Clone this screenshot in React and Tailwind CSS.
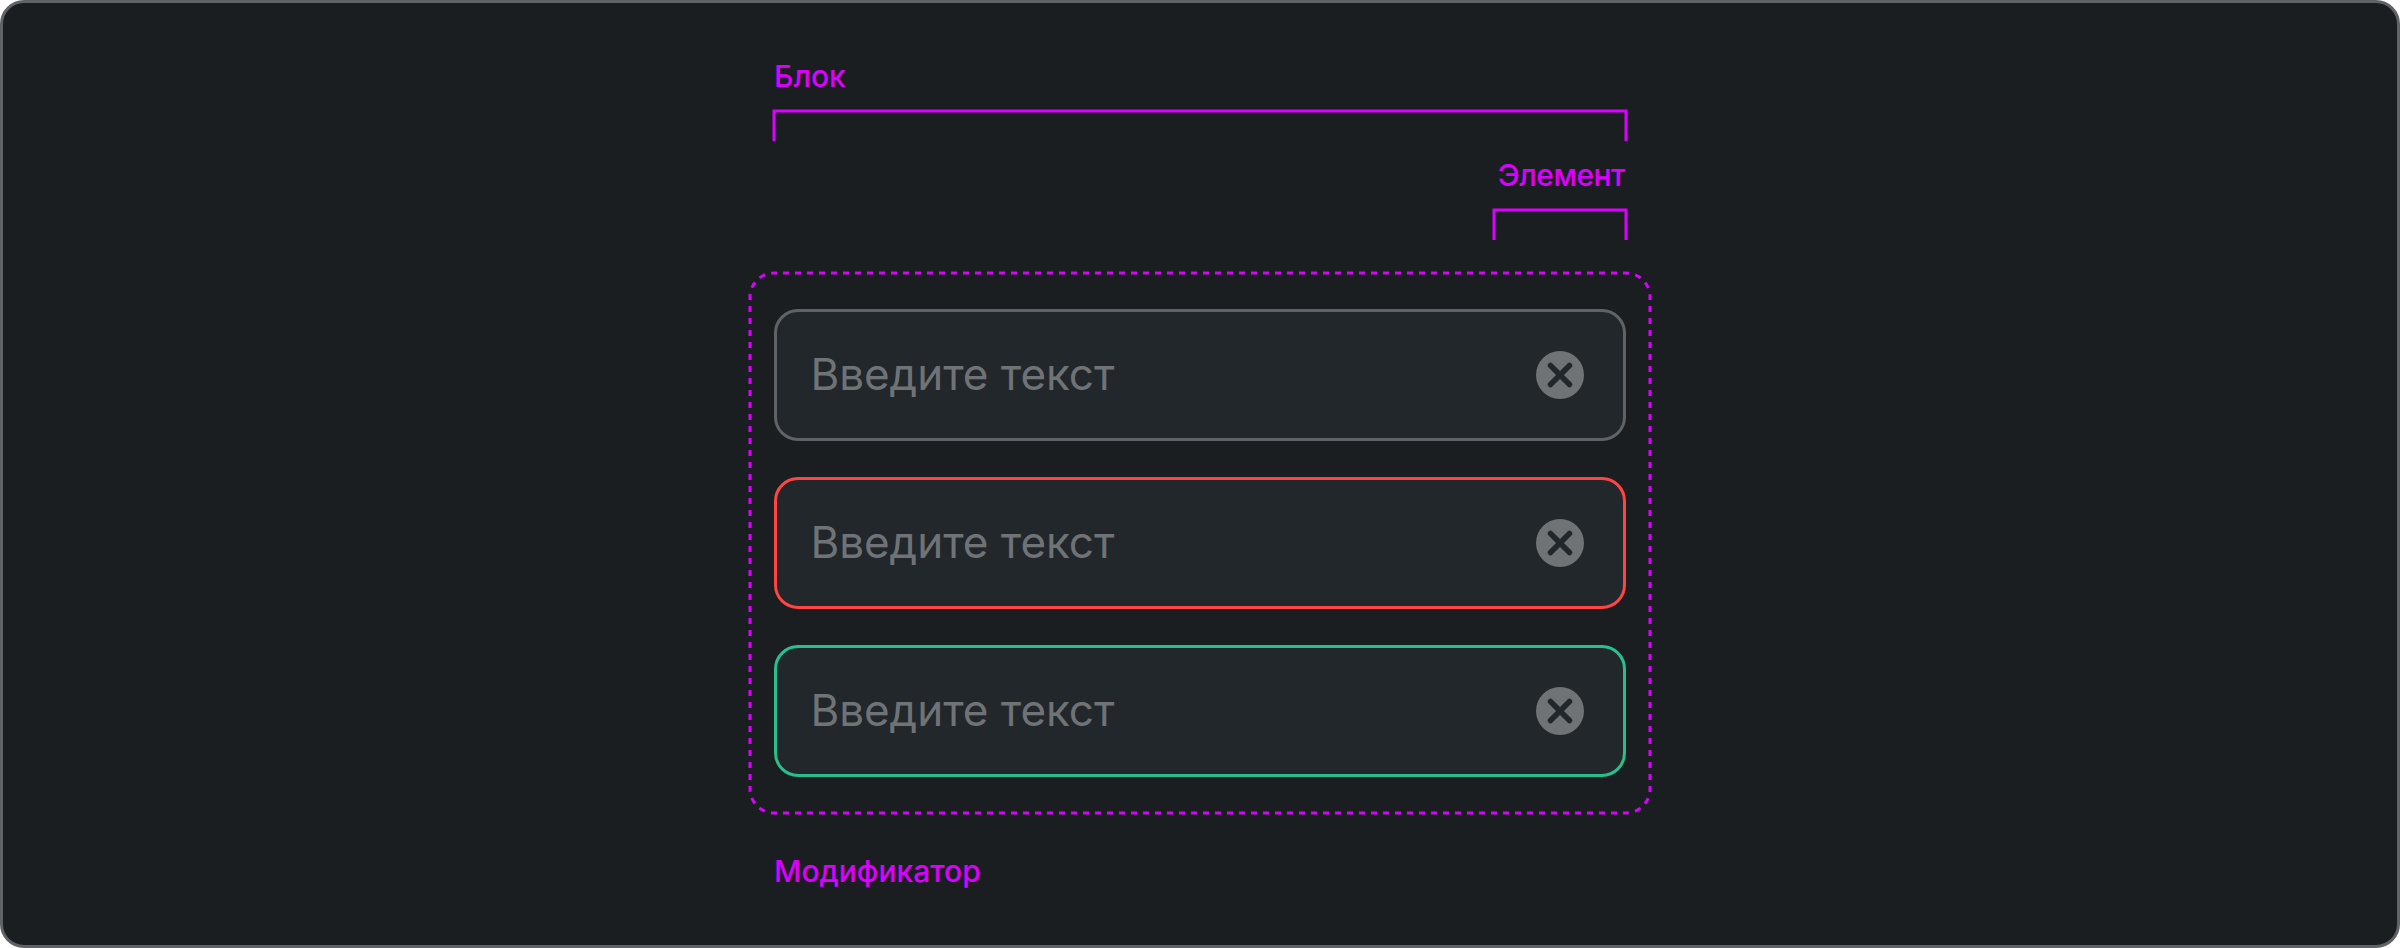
const FIELDS = [
  { id: "default", border: "border-[#5f6367]" },
  { id: "error", border: "border-[#ff4444]" },
  { id: "success", border: "border-[#28bf8c]" },
];

function ClearIcon() {
  return (
    <svg className="size-12 shrink-0" viewBox="0 0 48 48" fill="none" aria-hidden="true">
      <circle cx="24" cy="24" r="24" fill="#6f7376" />
      <path d="M14.5 14.5L33.5 33.5M33.5 14.5L14.5 33.5" stroke="#22272b" strokeWidth="5.5" strokeLinecap="round" />
    </svg>
  );
}

function Field({ border }) {
  return (
    <div className={`flex h-[132px] items-center justify-between rounded-[24px] border-[3px] bg-[#22272b] pr-[39px] pl-[33.5px] ${border}`}>
      <span className="pb-[2px] text-[44px] leading-[52px] tracking-[-0.06px] text-[#6f7376]">Введите текст</span>
      <ClearIcon />
    </div>
  );
}

function Bracket({ width, className }) {
  return (
    <svg className={className} width={width + 4} height="32" viewBox={`-2 -2 ${width + 4} 32`} fill="none" aria-hidden="true">
      <path d={`M0 30V0H${width}V30`} stroke="#db00ff" strokeWidth="3" />
    </svg>
  );
}

function DashedOutline() {
  return (
    <svg className="pointer-events-none absolute inset-0" width="904" height="544" viewBox="-2 -2 904 544" fill="none" stroke="#db00ff" strokeWidth="3" aria-hidden="true">
      <path d="M24 0H876M24 540H876M0 24V516M900 24V516" strokeDasharray="6 6" strokeDashoffset="3" />
      <path
        d="M0 24A24 24 0 0 1 24 0M876 0A24 24 0 0 1 900 24M900 516A24 24 0 0 1 876 540M24 540A24 24 0 0 1 0 516"
        strokeDasharray="6.283 6.283"
        strokeDashoffset="3.1415"
      />
    </svg>
  );
}

export default function App() {
  return (
    <div className="h-[948px] w-[2400px] bg-white font-['Inter',sans-serif]">
      <main className="flex h-full flex-col items-center rounded-[24px] border-[3px] border-[#5f6367] bg-[#1a1e21] pt-[55px] text-[30px] leading-[36px] font-medium text-[#db00ff]">
        <div className="flex w-[856px] flex-col">
          <div className="pl-[2px]">Блок</div>
          <Bracket width={852} className="mt-[15px]" />
          <div className="mt-[16px] pr-[3px] text-right tracking-[-0.5px]">Элемент</div>
          <Bracket width={132} className="mt-[15px] self-end" />
        </div>
        <section className="relative mt-[31px] flex h-[544px] w-[904px] flex-col justify-center gap-9 px-[26px] font-normal">
          <DashedOutline />
          {FIELDS.map((field) => (
            <Field key={field.id} border={field.border} />
          ))}
        </section>
        <div className="mt-[38px] w-[852px]">Модификатор</div>
      </main>
    </div>
  );
}
